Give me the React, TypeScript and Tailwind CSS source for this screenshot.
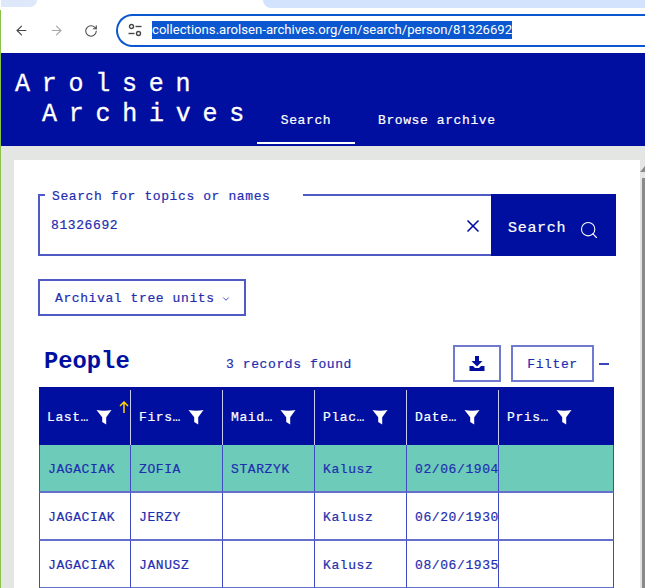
import React from "react";
import { ArrowLeft, ArrowRight, RotateCw, X, Search, ChevronDown } from "lucide-react";

const mono = "font-['Liberation_Mono','DejaVu_Sans_Mono',monospace]";
const txt = "text-[13px] tracking-[0.6px] [-webkit-text-stroke:0.2px] text-[#1f2eb0]";

function Funnel() {
  return (
    <svg width="16" height="16" viewBox="0 0 16 16" className="shrink-0">
      <path d="M0.5 1C5 2 11 2 15.5 1L10.2 8.2V15.5L6.2 13V8.2Z" fill="#fff" />
    </svg>
  );
}

const heads = ["Last…", "Firs…", "Maid…", "Plac…", "Date…", "Pris…"];
const rows = [
  ["JAGACIAK", "ZOFIA", "STARZYK", "Kalusz", "02/06/1904", ""],
  ["JAGACIAK", "JERZY", "", "Kalusz", "06/20/1930", ""],
  ["JAGACIAK", "JANUSZ", "", "Kalusz", "08/06/1935", ""],
];

export default function App() {
  return (
    <div className="w-[645px] h-[588px] overflow-hidden bg-white flex">
      <div className="w-[1px] flex flex-col shrink-0">
        <div className="h-[10px] bg-white" />
        <div className="flex-1 bg-[#8bc34a]" />
      </div>
      <div className="w-[644px] flex flex-col">
        {/* browser chrome */}
        <div className="h-[8px] flex bg-white shrink-0">
          <div className="w-[36px] h-[7px] bg-[#dde8fa] rounded-br-lg" />
          <div className="ml-auto w-[382px] bg-[#d3e3fd] rounded-bl-lg" />
        </div>
        <div className="h-[45px] shrink-0 flex items-center bg-white pl-[13px]">
          <ArrowLeft size={15} color="#474747" strokeWidth={1.8} />
          <ArrowRight size={15} color="#a8a8a8" strokeWidth={1.8} className="ml-[20px]" />
          <RotateCw size={14} color="#474747" strokeWidth={1.8} className="ml-[20px]" />
          <div className="ml-[18px] flex-1 h-[33px] mt-[-1px] border-2 border-r-0 border-[#0b57d0] rounded-l-full flex items-center pl-[10px]">
            <svg width="14" height="14" viewBox="0 0 14 14" fill="none" stroke="#474747" strokeWidth="1.4">
              <circle cx="3.5" cy="3.5" r="2" />
              <path d="M7.5 3.5H13.5" />
              <circle cx="10.5" cy="10.5" r="2" />
              <path d="M0.5 10.5H6.5" />
            </svg>
            <span className="ml-[10px] h-[18px] leading-[18px] bg-[#0b57d0] text-white text-[13.15px] font-['Roboto',sans-serif] whitespace-nowrap">
              collections.arolsen-archives.org/en/search/person/81326692
            </span>
          </div>
        </div>
        {/* blue header */}
        <div className={`h-[93px] shrink-0 bg-[#000f9f] flex text-white ${mono}`}>
          <div className="w-[256px] pl-[14px] pt-[17px] text-[25px] leading-[30px] tracking-[11.75px] [-webkit-text-stroke:0.3px] whitespace-nowrap">
            <div>Arolsen</div>
            <div className="pl-[27px]">Archives</div>
          </div>
          <div className="w-[98px] self-end h-[33px] mb-[2px] border-b-2 border-white flex justify-center text-[13px] tracking-[0.6px] [-webkit-text-stroke:0.2px]">
            Search
          </div>
          <div className="ml-[23px] self-end h-[35px] text-[13px] tracking-[0.6px] [-webkit-text-stroke:0.2px] whitespace-nowrap">Browse archive</div>
        </div>
        {/* page */}
        <div className="flex-1 min-h-0 bg-[#e4e6e4] pt-[14px] pl-[13px] flex">
          <div className={`w-[626px] shrink-0 pl-[24px] bg-white text-[#000f9f] ${mono}`}>
            <div className="mt-[34px] w-[578px] h-[62px] flex relative border-l-2 border-b-2 border-[#4f5ac4]">
              <div className="absolute -top-[8px] left-[-2px] flex w-full">
                <div className="w-[7px] h-[2px] bg-[#4f5ac4] mt-[8px]" />
                <span className={`ml-[7px] mt-[3px] leading-[15px] whitespace-nowrap ${txt}`}>Search for topics or names</span>
              </div>
              <div className={`flex-1 flex items-center pl-[11px] pt-[3px] relative ${txt}`}>
                <div className="absolute top-0 right-0 w-[188px] h-[2px] bg-[#4f5ac4]" />
                81326692
                <X size={20} strokeWidth={2} className="ml-auto mr-[8px] mt-[1px] text-[#000f9f]" />
              </div>
              <div className="w-[125px] h-[62px] shrink-0 bg-[#000f9f] text-white flex items-center pl-[17px] pt-[8px] text-[15px] tracking-[0.7px] [-webkit-text-stroke:0.2px]">
                Search
                <Search size={20} strokeWidth={1.3} className="ml-[13px] mt-[2px]" />
              </div>
            </div>
            <div className={`mt-[23px] w-[208px] h-[37px] border-2 border-[#4f5ac4] flex items-center pl-[15px] pt-[2px] whitespace-nowrap ${txt}`}>
              Archival tree units
              <ChevronDown size={10} strokeWidth={2} className="ml-[6px]" />
            </div>
            <div className="mt-[29px] h-[37px] flex items-center">
              <div className="ml-[6px] w-[182px] text-[23.8px] font-bold leading-none mt-[-4px]">People</div>
              <div className={`whitespace-nowrap mt-[3px] ${txt}`}>3 records found</div>
              <div className="ml-[101px] flex items-center">
                <div className="w-[48px] h-[37px] border-2 border-[#6f79d0] flex items-center justify-center">
                  <svg width="16" height="15" viewBox="0 0 16 15" fill="#000f9f">
                    <path d="M6 0h4v5h3.5L8 10.5 2.5 5H6Z" />
                    <path d="M0.5 10h3.5l2 2h4l2-2h3.5v5H0.5Z" />
                  </svg>
                </div>
                <div className={`ml-[10px] w-[83px] h-[37px] border-2 border-[#6f79d0] flex items-center justify-center pt-[2px] ${txt}`}>Filter</div>
                <div className="ml-[5px] w-[10px] h-[2px] bg-[#3a45b8]" />
              </div>
            </div>
            <div className="mt-[5px] ml-[1px] w-[575px] grid grid-cols-[92px_92px_92px_92px_92px_115px]">
              {heads.map((h, i) => (
                <div key={h} className="h-[58px] bg-[#000f9f] text-white flex items-center pl-[8px] pt-[4px] text-[13px] tracking-[0.6px] [-webkit-text-stroke:0.2px] relative">
                  {h}
                  <span className="ml-[7px] mt-[-2px]"><Funnel /></span>
                  {i < 5 && <div className="absolute right-0 top-[3px] bottom-0 w-[1px] bg-[#c9cdf0]" />}
                  {i === 0 && (
                    <svg width="10" height="12" viewBox="0 0 10 12" fill="none" stroke="#ffd400" strokeWidth="1.5" className="absolute right-[2px] top-[14px]">
                      <path d="M5 12V1M1 5l4-4 4 4" />
                    </svg>
                  )}
                </div>
              ))}
              {rows.flatMap((r, ri) =>
                r.map((c, ci) => (
                  <div
                    key={`${ri}-${ci}`}
                    className={`h-[48px] flex items-center pl-[8px] pt-[4px] overflow-hidden whitespace-nowrap border-b-2 border-b-[#6570cc] border-r border-r-[#3f4bbf] ${txt} ${ci === 0 ? "border-l border-l-[#3f4bbf] pl-[7px]" : ""} ${ri === 0 ? "bg-[#6dccb9]" : "bg-white"}`}
                  >
                    {c}
                  </div>
                ))
              )}
            </div>
          </div>
          <div className="w-[5px] flex flex-col items-end">
            <div className="h-[6px]" />
            <svg width="5" height="6" viewBox="0 0 5 6" fill="#8a8a8a"><path d="M5 0V6H0Z" /></svg>
            <div className="h-[6px]" />
            <div className="w-[3px] flex-1 bg-[#8a8a8a]" />
          </div>
        </div>
      </div>
    </div>
  );
}
